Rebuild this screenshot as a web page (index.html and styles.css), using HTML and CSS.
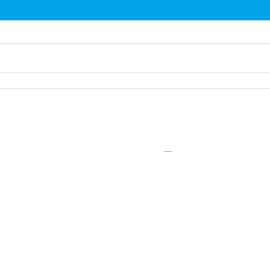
FILE: index.html
```html
<html>
<head>
  <title>List</title>
  <link rel="stylesheet" href="styles.css">
</head>
<body>

<div class="topbar"></div>

<div class="list">
  <div class="row row-first"></div>
  <div class="row row-second"></div>
  <div class="row row-third"></div>
</div>

<div class="content">
  <span class="dash"></span>
</div>

</body>
</html>
```

FILE: styles.css
```css
* {
  box-sizing: border-box;
}

body {
  margin: 0;
  font-family: 'Roboto', sans-serif;
  background: #ffffff;
  height: 270px;
  overflow: hidden;
}

.topbar {
  height: 21px;
  background: #03a3e8;
  border-bottom: 1px solid #a9def8;
}

.row {
  border-bottom: 1px solid #e6e6e6;
}

.row-first {
  height: 23px;
}

.row-second {
  height: 29px;
  border-bottom-color: #f0f0f0;
}

.row-third {
  height: 16px;
  border-bottom-color: #e8e8e8;
}

.content {
  padding: 62px 0 0 164px;
}

.dash {
  display: block;
  width: 8px;
  height: 1px;
  background: #c8c8c8;
}
```
